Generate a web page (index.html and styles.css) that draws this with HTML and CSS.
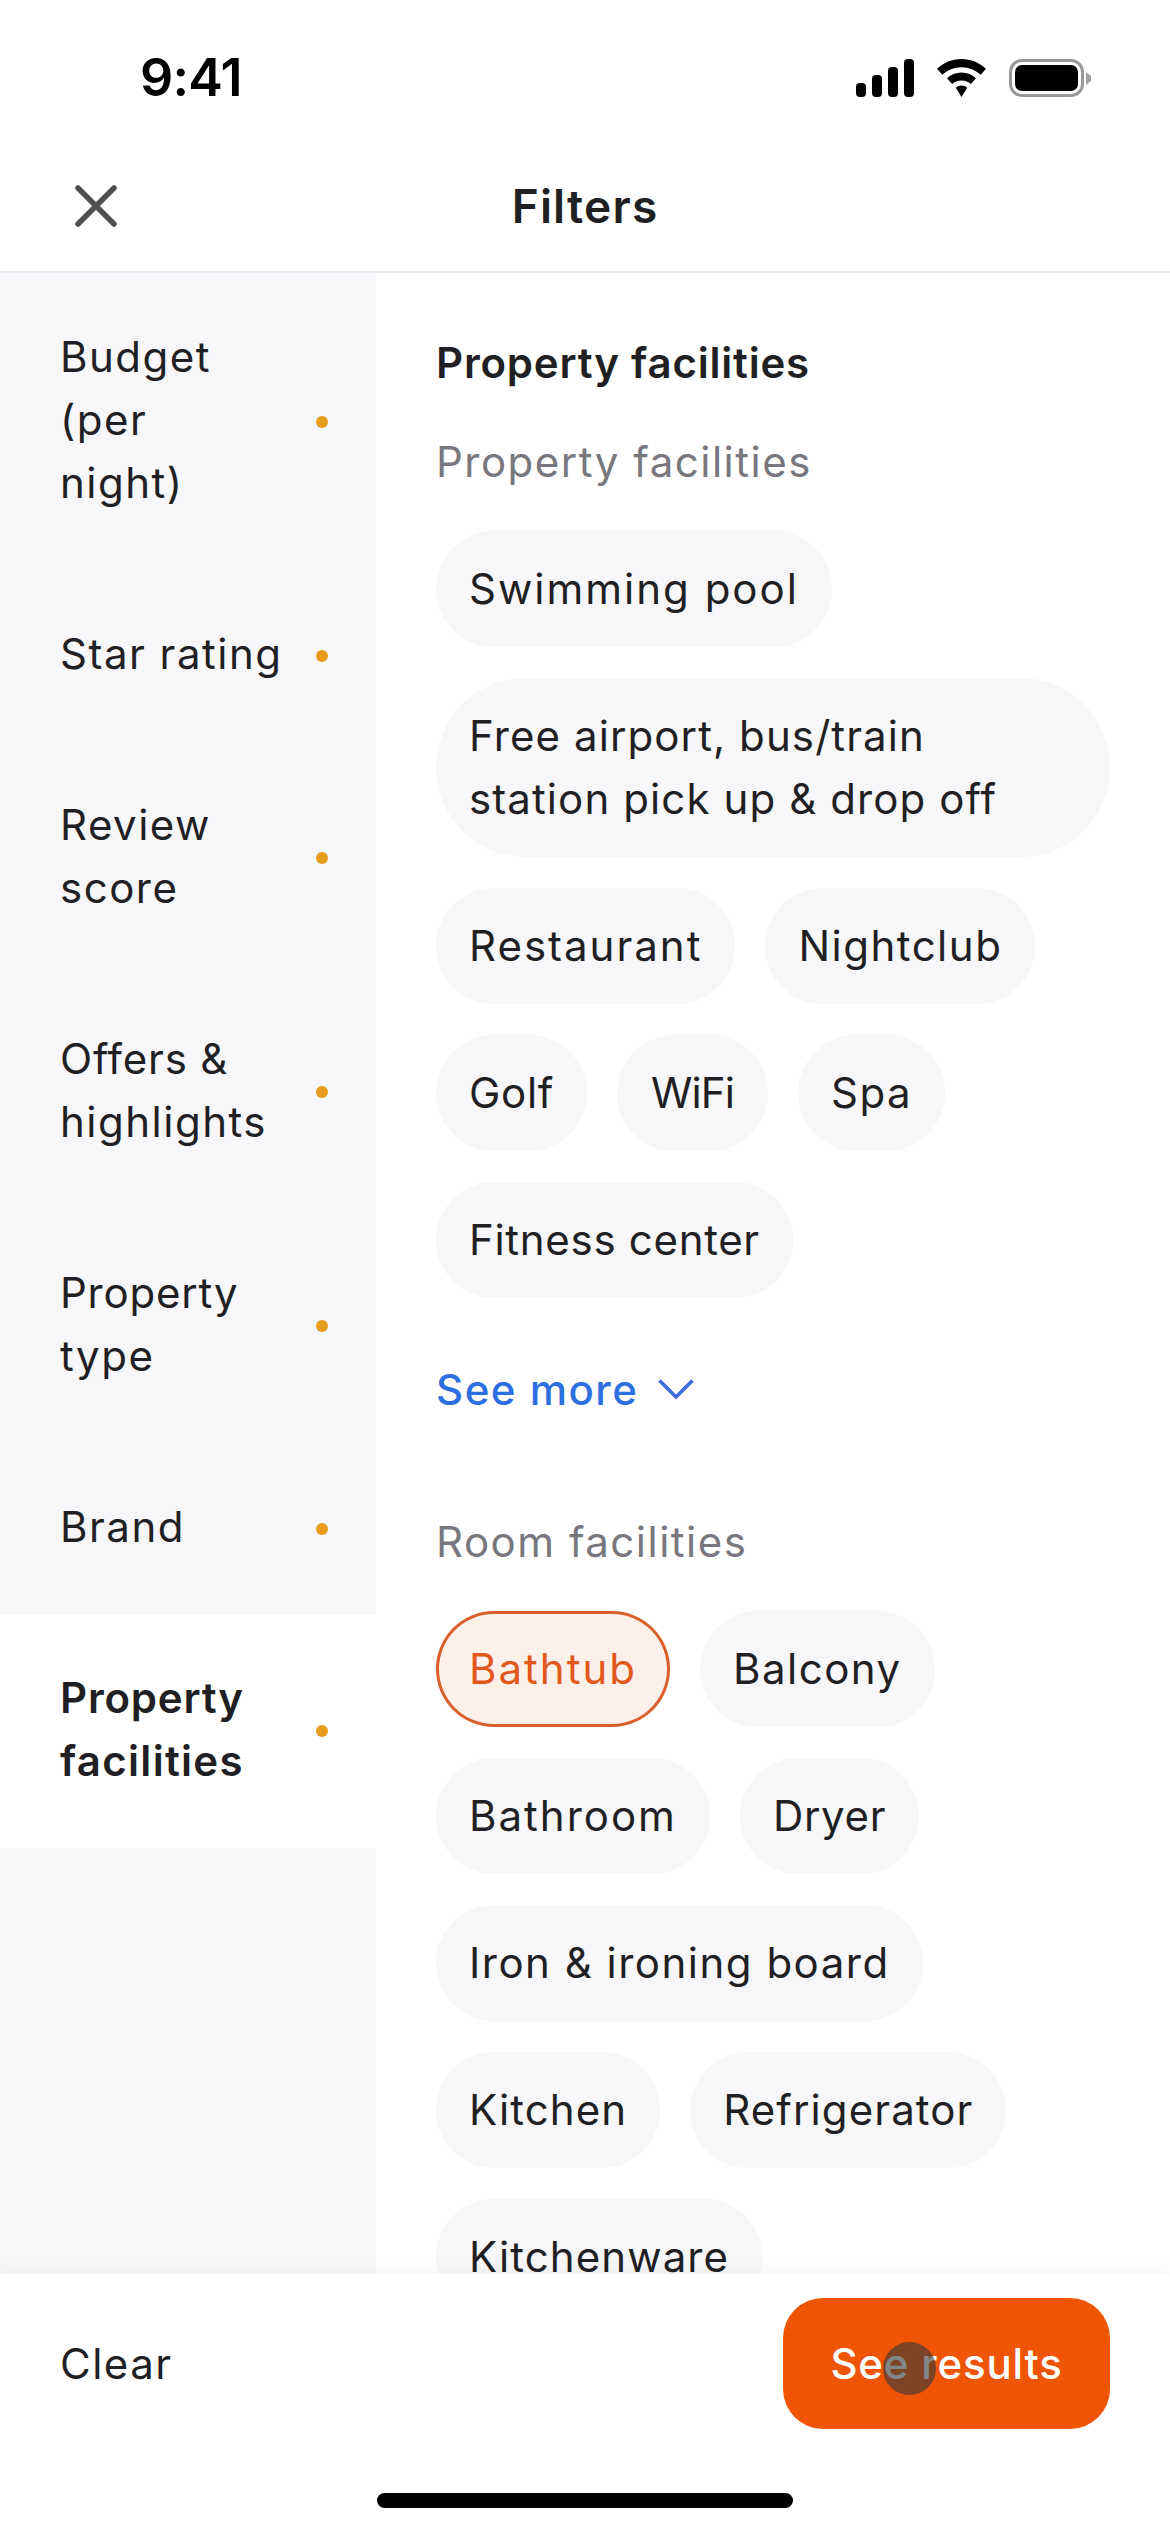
FILE: index.html
```html
<!DOCTYPE html>
<html lang="en">
<head>
<meta charset="utf-8">
<title>Filters</title>
<link rel="stylesheet" href="styles.css">
</head>
<body>
<div class="phone">
  <div class="status">
    <span class="time">9:41</span>
    <div class="status-icons">
      <svg class="signal" width="58" height="38" viewBox="0 0 58 38"><rect x="0" y="24" width="10" height="14" rx="4"/><rect x="16" y="16" width="10" height="22" rx="4"/><rect x="32" y="8" width="10" height="30" rx="4"/><rect x="48" y="0" width="10" height="38" rx="4"/></svg>
      <svg class="wifi" width="51" height="38" viewBox="0 0 50 38"><path d="M25 0C15.500 0 7 3.700 0.500 9.800L5.800 15.800C10.800 11.100 17.600 8.200 25 8.200C32.400 8.200 39.200 11.100 44.200 15.800L49.500 9.800C43 3.700 34.500 0 25 0Z"/><path d="M25 13.500C19.400 13.500 14.300 15.700 10.500 19.300L15.600 25C18.100 22.800 21.400 21.500 25 21.500C28.600 21.500 31.900 22.800 34.400 25L39.500 19.300C35.700 15.700 30.600 13.500 25 13.500Z"/><path d="M25 26.500C22.800 26.500 20.800 27.300 19.300 28.700L25 38L30.700 28.700C29.200 27.300 27.200 26.500 25 26.500Z"/></svg>
      <div class="battery"><div class="battery-shell"><div class="battery-fill"></div></div><svg class="battery-nub" width="5" height="13" viewBox="0 0 5 13"><path d="M0 0L5 4V9L0 13Z"/></svg></div>
    </div>
  </div>
  <header class="nav">
    <svg class="close" width="42" height="42" viewBox="0 0 42 42"><path d="M3 3L39 39M39 3L3 39"/></svg>
    <h1 class="nav-title">Filters</h1>
  </header>
  <div class="body">
    <aside class="side">
      <div class="side-item first"><span>Budget<br>(per<br>night)</span><i class="dot"></i></div>
      <div class="side-item"><span>Star rating</span><i class="dot"></i></div>
      <div class="side-item"><span>Review<br>score</span><i class="dot"></i></div>
      <div class="side-item"><span><span class="tight">Offers &amp;</span><br>highlights</span><i class="dot"></i></div>
      <div class="side-item"><span><span class="tight">Property</span><br>type</span><i class="dot"></i></div>
      <div class="side-item"><span>Brand</span><i class="dot"></i></div>
      <div class="side-item active"><span><span class="tight">Property</span><br>facilities</span><i class="dot"></i></div>
    </aside>
    <main class="content">
      <h2 class="section-title">Property facilities</h2>
      <h3 class="group-title">Property facilities</h3>
      <div class="chips">
        <span class="chip loose">Swimming pool</span>
        <span class="chip wide snug">Free airport, bus/train<br>station pick up &amp; drop off</span>
        <span class="chip loose">Restaurant</span>
        <span class="chip">Nightclub</span>
        <span class="chip tight">Golf</span>
        <span class="chip tighter">WiFi</span>
        <span class="chip">Spa</span>
        <span class="chip tight">Fitness center</span>
      </div>
      <div class="see-more">See more
        <svg width="36" height="20" viewBox="0 0 36 20"><path d="M1.500 1.500L18 18L34.500 1.500"/></svg>
      </div>
      <h3 class="group-title room">Room facilities</h3>
      <div class="chips">
        <span class="chip selected loose">Bathtub</span>
        <span class="chip">Balcony</span>
        <span class="chip loose">Bathroom</span>
        <span class="chip tight">Dryer</span>
        <span class="chip">Iron &amp; ironing board</span>
        <span class="chip snug">Kitchen</span>
        <span class="chip snug">Refrigerator</span>
        <span class="chip snug">Kitchenware</span>
      </div>
    </main>
  </div>
  <footer class="footer">
    <div class="actions">
      <span class="clear">Clear</span>
      <div class="cta">See results<i class="touch"></i></div>
    </div>
    <div class="home-bar"></div>
  </footer>
</div>
</body>
</html>
```
FILE: styles.css
```css
* { box-sizing: border-box; }
html, body { margin: 0; padding: 0; }
body { font-family: Inter, "Liberation Sans", sans-serif; color: #1f1f24; background: #fff; }
.phone { width: 1170px; height: 2532px; display: flex; flex-direction: column; overflow: hidden; }

.status { height: 156px; flex: none; display: flex; justify-content: space-between; align-items: flex-start; padding: 59px 79px 0 140px; }
.time { font-size: 52px; line-height: 38px; font-weight: 600; color: #000; letter-spacing: -0.8px; }
.status-icons { display: flex; align-items: flex-start; gap: 22px; }
.signal, .wifi { fill: #000; display: block; }
.battery { display: flex; align-items: center; }
.battery-shell { width: 75px; height: 38px; border: 3.500px solid #999; border-radius: 13px; padding: 3px; }
.battery-fill { width: 100%; height: 100%; background: #000; border-radius: 7px; }
.battery-nub { fill: #a0a0a0; margin-left: 2px; display: block; }

.nav { height: 117px; flex: none; position: relative; display: flex; align-items: center; justify-content: center; border-bottom: 2px solid #ecebef; padding-bottom: 14px; }
.close { position: absolute; left: 75px; top: 29px; fill: none; stroke: #4f4f4f; stroke-width: 5.500; stroke-linecap: round; }
.nav-title { margin: 0; font-size: 46px; line-height: 63px; font-weight: 600; letter-spacing: 1.200px; color: #1f1f24; }

.body { flex: 1; min-height: 0; display: flex; }
.side { width: 376px; flex: none; background: #f7f6f8; }
.side-item { display: flex; align-items: center; justify-content: space-between; padding: 51.500px 48px 56.500px 60px; font-size: 42px; line-height: 63px; letter-spacing: 1.500px; }
.side-item.active { background: #fff; font-weight: 600; letter-spacing: 1.300px; }
.side-item .tight { letter-spacing: 0.800px; }
.dot { width: 12px; height: 12px; border-radius: 50%; background: #e89c1c; flex: none; position: relative; top: 2.500px; }

.content { flex: 1; min-width: 0; padding: 58px 60px 0 60px; overflow: hidden; }
.section-title { margin: 0 0 36px; font-size: 42px; line-height: 63px; font-weight: 600; letter-spacing: 0.800px; }
.group-title { margin: 0 0 38px; font-size: 42px; line-height: 63px; font-weight: 400; color: #77777d; letter-spacing: 1.500px; }
.group-title.room { margin-top: 89px; }
.chips { display: flex; flex-wrap: wrap; gap: 31px 30px; }
.chip { display: block; padding: 25.500px 33px 27.500px; border-radius: 90px; background: #f7f6f8; font-size: 42px; line-height: 63px; letter-spacing: 1.500px; white-space: nowrap; }
.chip.wide { width: 100%; }
.chip.loose { letter-spacing: 2px; }
.chip.snug { letter-spacing: 1.100px; }
.chip.tight { letter-spacing: 0.700px; }
.chip.tighter { letter-spacing: -0.900px; padding: 25.500px 34px 27.500px; }
.chip.selected { background: #fdf0e8; box-shadow: inset 0 0 0 3px #d9602a; color: #e2571b; }
.see-more { margin-top: 60px; display: flex; align-items: center; gap: 20px; font-size: 42px; line-height: 63px; font-weight: 500; color: #2d6fe0; letter-spacing: 1.500px; }
.see-more svg { fill: none; stroke: #3f69df; stroke-width: 3.500; margin-top: -2px; }

.footer { height: 258px; flex: none; background: #fff; box-shadow: 0 -6px 18px rgba(20, 20, 40, 0.035); position: relative; padding: 24px 60px 24px; display: flex; flex-direction: column; justify-content: space-between; }
.actions { display: flex; justify-content: space-between; align-items: center; }
.clear { font-size: 42px; line-height: 63px; letter-spacing: 1.500px; }
.cta { position: relative; width: 327px; height: 131px; border-radius: 40px; background: #f05405; color: #fff; font-size: 42px; line-height: 131px; font-weight: 500; text-align: center; letter-spacing: 0.800px; }
.touch { position: absolute; left: 100px; top: 44px; width: 53px; height: 53px; border-radius: 50%; background: rgba(47, 57, 58, 0.6); }
.home-bar { width: 416px; height: 15px; border-radius: 8px; background: #000; align-self: center; }
```
